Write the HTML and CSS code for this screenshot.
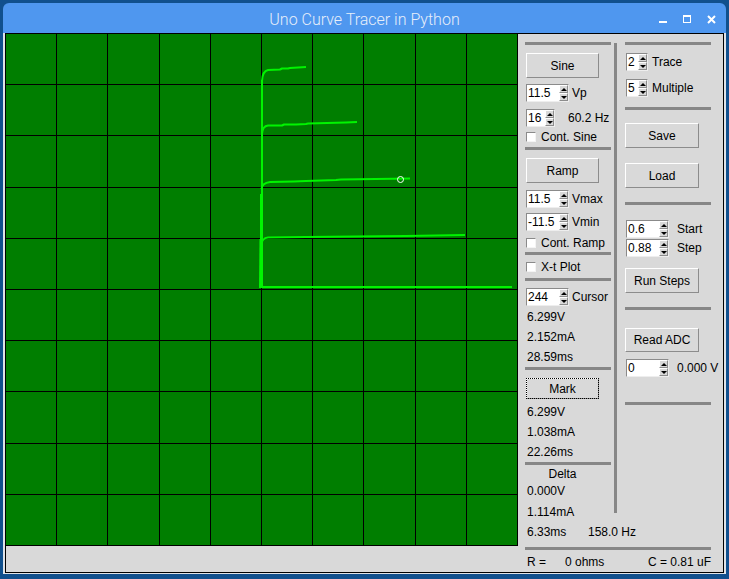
FILE: index.html
```html
<!DOCTYPE html>
<html>
<head>
<meta charset="utf-8">
<title>Uno Curve Tracer in Python</title>
<link rel="stylesheet" href="styles.css">
</head>
<body>
<div class="window">
  <div class="titlebar">
    <div></div>
    <div class="title">Uno Curve Tracer in Python</div>
    <div class="wicons">
      <svg width="9" height="9" viewBox="0 0 9 9" shape-rendering="crispEdges"><rect x="0" y="6" width="8" height="2" fill="#fff"/></svg>
      <svg width="9" height="9" viewBox="0 0 9 9" shape-rendering="crispEdges"><rect x="0" y="0" width="8" height="2" fill="#fff"/><rect x="0" y="0" width="1" height="8" fill="#fff"/><rect x="7" y="0" width="1" height="8" fill="#fff"/><rect x="0" y="7" width="8" height="1" fill="#fff"/></svg>
      <svg width="9" height="9" viewBox="0 0 9 9"><path d="M1,1 L8,8 M8,1 L1,8" stroke="#fff" stroke-width="2"/></svg>
    </div>
  </div>
  <div class="wbody">
    <div class="frame">
      <div class="plotcol">
        <svg class="plot" width="512" height="512" viewBox="0 0 512 512">
          <rect x="0" y="0" width="512" height="512" fill="#007e00"/>
          <g fill="#000" shape-rendering="crispEdges">
            <rect x="50" y="0" width="1" height="512"/>
            <rect x="101" y="0" width="1" height="512"/>
            <rect x="153" y="0" width="1" height="512"/>
            <rect x="204" y="0" width="1" height="512"/>
            <rect x="255" y="0" width="1" height="512"/>
            <rect x="306" y="0" width="1" height="512"/>
            <rect x="357" y="0" width="1" height="512"/>
            <rect x="409" y="0" width="1" height="512"/>
            <rect x="460" y="0" width="1" height="512"/>
            <rect x="511" y="0" width="1" height="512"/>
            <rect x="0" y="50" width="512" height="1"/>
            <rect x="0" y="101" width="512" height="1"/>
            <rect x="0" y="153" width="512" height="1"/>
            <rect x="0" y="204" width="512" height="1"/>
            <rect x="0" y="255" width="512" height="1"/>
            <rect x="0" y="306" width="512" height="1"/>
            <rect x="0" y="357" width="512" height="1"/>
            <rect x="0" y="409" width="512" height="1"/>
            <rect x="0" y="460" width="512" height="1"/>
            <rect x="0" y="511" width="512" height="1"/>
          </g>
          <g fill="none" stroke="#00f400" stroke-width="2" stroke-linejoin="round">
            <path d="M255,253 L255,160"/>
            <path d="M256,252 L256,46"/>
            <path d="M254,253 L254.5,205"/>
            <path d="M256,47 Q256.5,37 262,36 L274,35.5 L276,34.5 L282,34.5 L284,34 L300,33"/>
            <path d="M256,100 Q256.5,92 262,91.5 L276,91.5 L278,90.5 L290,90.5 L300,90 L302,89.5 L340,88.5 L351,88"/>
            <path d="M255.5,155 Q256,149 264,148 L288,147.5 L300,147 L330,146 L335,145.5 L404,144.5"/>
            <path d="M255.5,210 Q256,204 262,203.5 L300,203 L350,202.5 L400,202 L459,201"/>
            <path d="M253,253 L506,253"/>
          </g>
          <circle cx="394.5" cy="145.5" r="3" fill="none" stroke="#fff" stroke-width="1"/>
        </svg>
      </div>
      <div class="panel">
        <div class="cols">
          <div class="col">
            <div class="hsep"></div>
            <div class="btn m8">Sine</div>
            <div class="row m6"><div class="spin w43"><span class="v">11.5</span><span class="ar"><i class="up"></i><i class="dn"></i></span></div><span class="lbl">Vp</span></div>
            <div class="row m7"><div class="spin w29"><span class="v">16</span><span class="ar"><i class="up"></i><i class="dn"></i></span></div><span class="lbl l13">60.2 Hz</span></div>
            <div class="chk m4"><span class="box"></span><span class="cl">Cont. Sine</span></div>
            <div class="hsep m4"></div>
            <div class="btn m8">Ramp</div>
            <div class="row m7"><div class="spin w43"><span class="v">11.5</span><span class="ar"><i class="up"></i><i class="dn"></i></span></div><span class="lbl">Vmax</span></div>
            <div class="row m5"><div class="spin w43"><span class="v">-11.5</span><span class="ar"><i class="up"></i><i class="dn"></i></span></div><span class="lbl">Vmin</span></div>
            <div class="chk m6"><span class="box"></span><span class="cl">Cont. Ramp</span></div>
            <div class="hsep m3"></div>
            <div class="chk m6"><span class="box"></span><span class="cl">X-t Plot</span></div>
            <div class="hsep m5"></div>
            <div class="row m7"><div class="spin w43"><span class="v">244</span><span class="ar"><i class="up"></i><i class="dn"></i></span></div><span class="lbl">Cursor</span></div>
            <div class="t m1">6.299V</div>
            <div class="t">2.152mA</div>
            <div class="t">28.59ms</div>
            <div class="hsep"></div>
            <div class="btn focus m8">Mark</div>
            <div class="t h19 m4">6.299V</div>
            <div class="t">1.038mA</div>
            <div class="t">22.26ms</div>
            <div class="hsep"></div>
            <div class="delta">Delta</div>
            <div class="t h16">0.000V</div>
            <div class="t m3">1.114mA</div>
            <div class="t"><span class="w61">6.33ms</span>158.0 Hz</div>
          </div>
          <div class="vsep"></div>
          <div class="col">
            <div class="hsep"></div>
            <div class="row m8"><div class="spin w22 r"><span class="v">2</span><span class="ar"><i class="up"></i><i class="dn"></i></span></div><span class="lbl l4">Trace</span></div>
            <div class="row m8"><div class="spin w22 r"><span class="v">5</span><span class="ar"><i class="up"></i><i class="dn"></i></span></div><span class="lbl l4">Multiple</span></div>
            <div class="hsep m10"></div>
            <div class="btn w74 m13">Save</div>
            <div class="btn w74 m15">Load</div>
            <div class="hsep m14"></div>
            <div class="row m15"><div class="spin w43 r"><span class="v">0.6</span><span class="ar"><i class="up"></i><i class="dn"></i></span></div><span class="lbl l8">Start</span></div>
            <div class="row m1"><div class="spin w43 r"><span class="v">0.88</span><span class="ar"><i class="up"></i><i class="dn"></i></span></div><span class="lbl l8">Step</span></div>
            <div class="btn w74 m11">Run Steps</div>
            <div class="hsep m14"></div>
            <div class="btn w74 h24 m18">Read ADC</div>
            <div class="row m7"><div class="spin w43 r"><span class="v">0</span><span class="ar"><i class="up"></i><i class="dn"></i></span></div><span class="lbl l8">0.000 V</span></div>
            <div class="hsep m25"></div>
          </div>
        </div>
        <div class="hsep wide"></div>
        <div class="status"><span class="rl">R =</span><span>0 ohms</span><span class="cap">C = 0.81 uF</span></div>
      </div>
    </div>
  </div>
</div>
</body>
</html>
```
FILE: styles.css
```css
html, body {
  margin: 0;
  padding: 0;
}
body {
  background: #11508d;
  width: 729px;
  height: 579px;
  overflow: hidden;
  font-family: "Liberation Sans", Arial, sans-serif;
  font-size: 12px;
  color: #000;
}
.window {
  margin: 3px 0 0 3px;
  width: 723px;
}
.titlebar {
  height: 30px;
  background: #4f97ef;
  border-radius: 6px 6px 0 0;
  display: grid;
  grid-template-columns: 1fr auto 1fr;
}
.title {
  font-family: Roboto, "Open Sans", sans-serif;
  font-weight: 300;
  font-size: 16px;
  color: #e6eefa;
  line-height: 27px;
  padding-top: 3px;
  white-space: nowrap;
}
.wicons {
  justify-self: end;
  display: flex;
  gap: 15px;
  margin-top: 12px;
  padding-right: 10px;
  height: 9px;
}
.wicons svg {
  display: block;
}
.wbody {
  border: 2px solid #dfe3e8;
  border-top: 0;
  border-bottom-width: 1px;
}
.frame {
  border: 1px solid #000;
  height: 538px;
  display: flex;
  background: #d9d9d9;
}
.plotcol {
  width: 512px;
  flex: none;
}
.plot {
  display: block;
}
.panel {
  width: 205px;
  box-sizing: border-box;
  padding: 8px 0 0 7px;
  display: flex;
  flex-direction: column;
}
.cols {
  display: flex;
  align-items: flex-start;
}
.col {
  width: 86px;
  flex: none;
}
.vsep {
  width: 3px;
  height: 470px;
  background: #878787;
  margin: 1px 8px 0 3px;
  flex: none;
}
.hsep {
  height: 3px;
  background: #878787;
}
.hsep.wide {
  width: 186px;
  margin-top: 5px;
}
.m1 { margin-top: 1px; }
.m3 { margin-top: 3px; }
.m4 { margin-top: 4px; }
.m5 { margin-top: 5px; }
.m6 { margin-top: 6px; }
.m7 { margin-top: 7px; }
.m8 { margin-top: 8px; }
.m10 { margin-top: 10px; }
.m11 { margin-top: 11px; }
.m13 { margin-top: 13px; }
.m14 { margin-top: 14px; }
.m15 { margin-top: 15px; }
.m18 { margin-top: 18px; }
.m25 { margin-top: 25px; }

.btn {
  box-sizing: border-box;
  width: 73px;
  height: 25px;
  margin-left: 1px;
  border: 1px solid;
  border-color: #ffffff #8c8c8c #8c8c8c #ffffff;
  background: #d9d9d9;
  display: flex;
  align-items: center;
  justify-content: center;
  white-space: nowrap;
}
.btn.w74 { width: 74px; margin-left: 0; }
.btn.h24 { height: 24px; }
.btn.focus {
  height: 21px;
  outline: 1px dotted #000;
  outline-offset: -1px;
}
.row {
  display: flex;
  align-items: center;
  height: 18px;
}
.spin {
  box-sizing: border-box;
  height: 18px;
  margin-left: 1px;
  display: flex;
  background: #fff;
  border: 1px solid;
  border-color: #8a8a8a #eeeeee #eeeeee #8a8a8a;
  flex: none;
}
.spin.w43 { width: 43px; }
.spin.w29 { width: 29px; }
.spin.w22 { width: 22px; }
.spin .v {
  flex: 1;
  padding-left: 1px;
  line-height: 16px;
  white-space: nowrap;
  overflow: hidden;
}
.spin .ar {
  width: 9px;
  display: flex;
  flex-direction: column;
  background: #d9d9d9;
  flex: none;
}
.spin .ar i {
  flex: 1;
  box-sizing: border-box;
  border: 1px solid;
  border-color: #ffffff #8c8c8c #8c8c8c #ffffff;
  display: flex;
  align-items: center;
  justify-content: center;
}
.spin .ar i.up::after {
  content: "";
  border-left: 3px solid transparent;
  border-right: 3px solid transparent;
  border-bottom: 3px solid #000;
}
.spin .ar i.dn::after {
  content: "";
  border-left: 3px solid transparent;
  border-right: 3px solid transparent;
  border-top: 3px solid #000;
}
.lbl {
  margin-left: 3px;
  white-space: nowrap;
}
.lbl.l13 { margin-left: 13px; }
.lbl.l4 { margin-left: 4px; }
.lbl.l8 { margin-left: 8px; }
.chk {
  display: flex;
  align-items: center;
  height: 12px;
}
.chk .box {
  box-sizing: border-box;
  width: 10px;
  height: 10px;
  margin-left: 1px;
  background: #fff;
  border: 1px solid;
  border-color: #8a8a8a #f4f4f4 #f4f4f4 #8a8a8a;
  flex: none;
}
.chk .cl {
  margin-left: 5px;
  white-space: nowrap;
}
.t {
  height: 20px;
  line-height: 20px;
  padding-left: 2px;
  white-space: nowrap;
}
.t.h19 { height: 19px; line-height: 19px; }
.t.h16 { height: 16px; line-height: 16px; }
.w61 {
  display: inline-block;
  width: 61px;
}
.delta {
  width: 73px;
  margin-left: 1px;
  height: 18px;
  line-height: 18px;
  text-align: center;
}
.status {
  width: 186px;
  margin-top: 3px;
  height: 18px;
  line-height: 18px;
  display: flex;
  white-space: nowrap;
}
.status .rl {
  width: 38px;
  padding-left: 2px;
}
.status .cap {
  margin-left: auto;
}
```
